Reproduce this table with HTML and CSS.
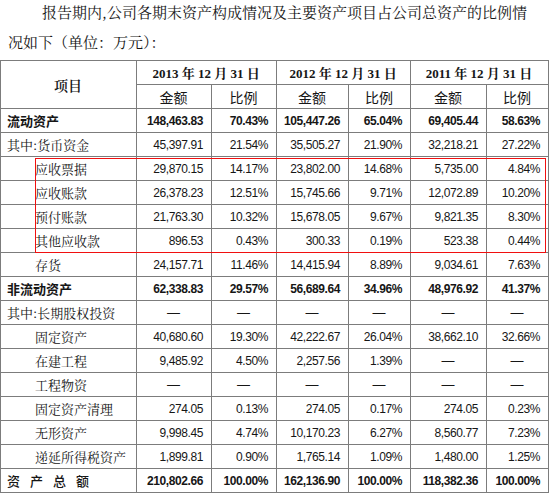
FILE: index.html
```html
<!DOCTYPE html>
<html lang="zh-CN">
<head>
    <meta charset="UTF-8">
    <meta name="viewport" content="width=device-width, initial-scale=1.0">
    <title>资产构成情况</title>
    <link rel="stylesheet" href="styles.css">
</head>
<body>

<p class="intro">报告期内,公司各期末资产构成情况及主要资产项目占公司总资产的比例情<br>况如下（单位：万元）：</p>

<div class="sheet">
    <table class="assets">
        <colgroup>
            <col class="c-item">
            <col class="c-amt1">
            <col class="c-pct1">
            <col class="c-amt2">
            <col class="c-pct2">
            <col class="c-amt3">
            <col class="c-pct3">
        </colgroup>
        <tr>
            <td class="head-item" rowspan="2">项目</td>
            <td class="year" colspan="2">2013 年 12 月 31 日</td>
            <td class="year" colspan="2">2012 年 12 月 31 日</td>
            <td class="year" colspan="2">2011 年 12 月 31 日</td>
        </tr>
        <tr>
            <td class="sub">金额</td><td class="sub">比例</td>
            <td class="sub">金额</td><td class="sub">比例</td>
            <td class="sub">金额</td><td class="sub">比例</td>
        </tr>
        <tr class="strong">
            <td class="label">流动资产</td>
            <td class="num">148,463.83</td><td class="num">70.43%</td>
            <td class="num">105,447.26</td><td class="num">65.04%</td>
            <td class="num">69,405.44</td><td class="num">58.63%</td>
        </tr>
        <tr>
            <td class="label">其中:货币资金</td>
            <td class="num">45,397.91</td><td class="num">21.54%</td>
            <td class="num">35,505.27</td><td class="num">21.90%</td>
            <td class="num">32,218.21</td><td class="num">27.22%</td>
        </tr>
        <tr>
            <td class="label indent">应收票据</td>
            <td class="num">29,870.15</td><td class="num">14.17%</td>
            <td class="num">23,802.00</td><td class="num">14.68%</td>
            <td class="num">5,735.00</td><td class="num">4.84%</td>
        </tr>
        <tr>
            <td class="label indent">应收账款</td>
            <td class="num">26,378.23</td><td class="num">12.51%</td>
            <td class="num">15,745.66</td><td class="num">9.71%</td>
            <td class="num">12,072.89</td><td class="num">10.20%</td>
        </tr>
        <tr>
            <td class="label indent">预付账款</td>
            <td class="num">21,763.30</td><td class="num">10.32%</td>
            <td class="num">15,678.05</td><td class="num">9.67%</td>
            <td class="num">9,821.35</td><td class="num">8.30%</td>
        </tr>
        <tr>
            <td class="label indent">其他应收款</td>
            <td class="num">896.53</td><td class="num">0.43%</td>
            <td class="num">300.33</td><td class="num">0.19%</td>
            <td class="num">523.38</td><td class="num">0.44%</td>
        </tr>
        <tr>
            <td class="label indent">存货</td>
            <td class="num">24,157.71</td><td class="num">11.46%</td>
            <td class="num">14,415.94</td><td class="num">8.89%</td>
            <td class="num">9,034.61</td><td class="num">7.63%</td>
        </tr>
        <tr class="strong">
            <td class="label">非流动资产</td>
            <td class="num">62,338.83</td><td class="num">29.57%</td>
            <td class="num">56,689.64</td><td class="num">34.96%</td>
            <td class="num">48,976.92</td><td class="num">41.37%</td>
        </tr>
        <tr>
            <td class="label">其中:长期股权投资</td>
            <td class="dash">—</td><td class="dash">—</td>
            <td class="dash">—</td><td class="dash">—</td>
            <td class="dash">—</td><td class="dash">—</td>
        </tr>
        <tr>
            <td class="label indent">固定资产</td>
            <td class="num">40,680.60</td><td class="num">19.30%</td>
            <td class="num">42,222.67</td><td class="num">26.04%</td>
            <td class="num">38,662.10</td><td class="num">32.66%</td>
        </tr>
        <tr>
            <td class="label indent">在建工程</td>
            <td class="num">9,485.92</td><td class="num">4.50%</td>
            <td class="num">2,257.56</td><td class="num">1.39%</td>
            <td class="dash">—</td><td class="dash">—</td>
        </tr>
        <tr>
            <td class="label indent">工程物资</td>
            <td class="dash">—</td><td class="dash">—</td>
            <td class="dash">—</td><td class="dash">—</td>
            <td class="dash">—</td><td class="dash">—</td>
        </tr>
        <tr>
            <td class="label indent">固定资产清理</td>
            <td class="num">274.05</td><td class="num">0.13%</td>
            <td class="num">274.05</td><td class="num">0.17%</td>
            <td class="num">274.05</td><td class="num">0.23%</td>
        </tr>
        <tr>
            <td class="label indent">无形资产</td>
            <td class="num">9,998.45</td><td class="num">4.74%</td>
            <td class="num">10,170.23</td><td class="num">6.27%</td>
            <td class="num">8,560.77</td><td class="num">7.23%</td>
        </tr>
        <tr>
            <td class="label indent">递延所得税资产</td>
            <td class="num">1,899.81</td><td class="num">0.90%</td>
            <td class="num">1,765.14</td><td class="num">1.09%</td>
            <td class="num">1,480.00</td><td class="num">1.25%</td>
        </tr>
        <tr class="strong">
            <td class="label total">资产总额</td>
            <td class="num">210,802.66</td><td class="num">100.00%</td>
            <td class="num">162,136.90</td><td class="num">100.00%</td>
            <td class="num">118,382.36</td><td class="num">100.00%</td>
        </tr>
    </table>
    <!-- 红框标注 -->
    <div class="mark"></div>
</div>

</body>
</html>
```

FILE: styles.css
```css
body, html {
    margin: 0;
    padding: 0;
    background: #fff;
}
body {
    font-family: "Noto Serif CJK SC", "Noto Sans CJK SC", serif;
    color: #161616;
}
.intro {
    margin: -3px 0 3px 0;
    padding: 0 8px;
    font-size: 15px;
    line-height: 30px;
    text-indent: 34px;
    white-space: nowrap;
}
.sheet {
    position: relative;
    width: 549px;
}
.assets {
    border-collapse: collapse;
    table-layout: fixed;
    width: 549px;
}
.c-item { width: 136px; }
.c-amt1 { width: 75px; }
.c-pct1 { width: 65px; }
.c-amt2 { width: 72px; }
.c-pct2 { width: 62px; }
.c-amt3 { width: 76px; }
.c-pct3 { width: 62px; }
.assets td {
    border: 1px solid #7c7c7c;
    height: 23px;
    padding: 0 7px 0 6px;
    font-size: 13px;
    white-space: nowrap;
    vertical-align: middle;
}
.assets .head-item {
    text-align: center;
    font-weight: 600;
    font-size: 14px;
}
.assets .year {
    text-align: center;
    font-family: "Liberation Serif", "Noto Serif CJK SC", serif;
    font-weight: bold;
    font-size: 13px;
}
.assets .sub {
    text-align: center;
    font-family: "Noto Sans CJK SC", sans-serif;
    font-size: 14px;
}
.assets .indent {
    padding-left: 34px;
}
.strong .label {
    font-family: "Noto Sans CJK SC", sans-serif;
    font-weight: bold;
}
.strong .label.total {
    font-weight: 500;
    letter-spacing: 10px;
}
.assets .num {
    text-align: right;
    font-family: "Liberation Sans", sans-serif;
    font-size: 12px;
    letter-spacing: -0.4px;
    padding-right: 8px;
}
.strong .num {
    font-weight: bold;
}
.assets .dash {
    text-align: center;
    font-family: "Liberation Sans", sans-serif;
}
.mark {
    position: absolute;
    left: 35px;
    top: 98px;
    width: 509px;
    height: 93px;
    border: 1px solid #f01010;
}
```
